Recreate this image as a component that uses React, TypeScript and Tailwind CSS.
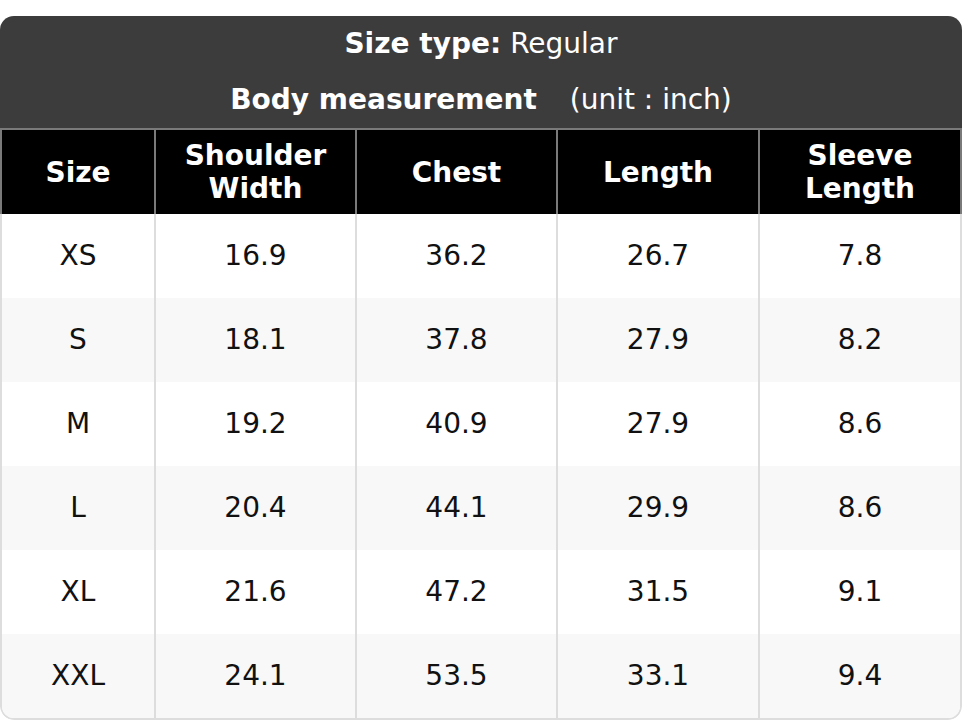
import React from "react";

const rows = [
  ["XS", "16.9", "36.2", "26.7", "7.8"],
  ["S", "18.1", "37.8", "27.9", "8.2"],
  ["M", "19.2", "40.9", "27.9", "8.6"],
  ["L", "20.4", "44.1", "29.9", "8.6"],
  ["XL", "21.6", "47.2", "31.5", "9.1"],
  ["XXL", "24.1", "53.5", "33.1", "9.4"],
];

const headers: React.ReactNode[] = [
  "Size",
  <>Shoulder<br />Width</>,
  "Chest",
  "Length",
  <>Sleeve<br />Length</>,
];

export default function App() {
  return (
    <div
      className="w-[962px] h-[720px] bg-white pt-4"
      style={{ fontFamily: '"DejaVu Sans", sans-serif' }}
    >
      <div className="rounded-[14px] overflow-hidden">
        <div className="bg-[#3c3c3c] text-white text-[28px] text-center">
          <div className="h-[56px] flex items-center justify-center">
            <span className="font-bold">Size type:</span>
            <span className="ml-[9px]">Regular</span>
          </div>
          <div className="h-[56px] flex items-center justify-center">
            <span className="font-bold">Body measurement</span>
            <span className="ml-[33px]">(unit : inch)</span>
          </div>
        </div>
        <div className="border-t-2 border-x-2 border-[#7a7a7a] bg-black grid grid-cols-[152px_201px_201px_202px_202px] h-[86px]">
          {headers.map((h, i) => (
            <div
              key={i}
              className={
                "flex items-center justify-center text-center text-white font-bold text-[28px] leading-[33px] " +
                (i > 0 ? "border-l-2 border-[#7a7a7a]" : "")
              }
            >
              <div>{h}</div>
            </div>
          ))}
        </div>
        <div className="border-x-2 border-b-2 border-[#dddddd] rounded-b-[14px] overflow-hidden">
          {rows.map((r, ri) => (
            <div
              key={ri}
              className={
                "grid grid-cols-[152px_201px_201px_202px_202px] h-[84px] " +
                (ri % 2 === 1 ? "bg-[#f8f8f8]" : "bg-white")
              }
            >
              {r.map((c, ci) => (
                <div
                  key={ci}
                  className={
                    "flex items-center justify-center text-[28px] text-[#111]" +
                    (ci > 0 ? " border-l-2 border-[#dddddd]" : "")
                  }
                >
                  {c}
                </div>
              ))}
            </div>
          ))}
        </div>
      </div>
    </div>
  );
}
